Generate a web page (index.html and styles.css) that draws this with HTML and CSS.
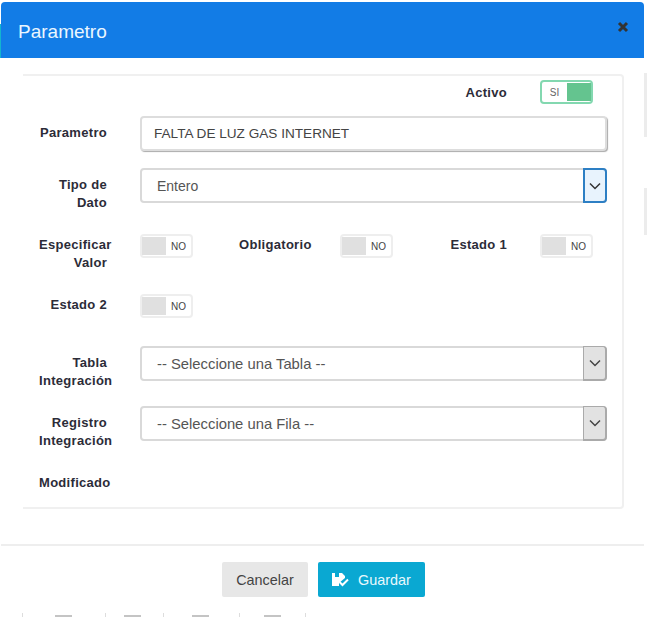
FILE: index.html
```html
<!DOCTYPE html>
<html lang="es">
  <head>
    <meta charset="UTF-8" />
    <meta name="viewport" content="width=device-width, initial-scale=1.0" />
    <title>Parametro</title>
    <link rel="stylesheet" href="styles.css">
  </head>
  <body>
    <div class="page">
      <div class="rail rail-left"><div class="rail-teal"></div></div>
      <div class="modal">
        <div class="modal-header">
          <h1>Parametro</h1>
          <button class="close" aria-label="Cerrar">
            <svg width="12" height="12" viewBox="0 0 12 12"><path d="M2 2l8 8M10 2l-8 8" stroke="#333" stroke-width="3" fill="none"/></svg>
          </button>
        </div>
        <div class="modal-body">
          <div class="card">
            <div class="row row-activo">
              <label class="lbl lbl-activo">Activo</label>
              <div class="field"><div class="toggle on"><span class="toggle-text">SI</span><span class="knob"></span></div></div>
            </div>
            <div class="row row-parametro">
              <label class="lbl lbl-input">Parametro</label>
              <div class="field field-wide"><input class="text-input" type="text" value="FALTA DE LUZ GAS INTERNET"></div>
            </div>
            <div class="row row-tipo">
              <label class="lbl lbl-input">Tipo de Dato</label>
              <div class="field field-wide">
                <div class="select">
                  <select><option>Entero</option></select>
                  <span class="select-arrow focused"><svg width="12" height="8" viewBox="0 0 12 8"><path d="M1 1.5l5 5 5-5" stroke="#333" stroke-width="1.5" fill="none"/></svg></span>
                </div>
              </div>
            </div>
            <div class="row row-flags">
              <label class="lbl">Especificar Valor</label>
              <div class="field"><div class="toggle"><span class="knob"></span><span class="toggle-text">NO</span></div></div>
              <label class="lbl">Obligatorio</label>
              <div class="field"><div class="toggle"><span class="knob"></span><span class="toggle-text">NO</span></div></div>
              <label class="lbl">Estado 1</label>
              <div class="field"><div class="toggle"><span class="knob"></span><span class="toggle-text">NO</span></div></div>
            </div>
            <div class="row row-estado">
              <label class="lbl">Estado 2</label>
              <div class="field"><div class="toggle"><span class="knob"></span><span class="toggle-text">NO</span></div></div>
            </div>
            <div class="row row-tabla">
              <label class="lbl lbl-input">Tabla Integración</label>
              <div class="field field-wide">
                <div class="select">
                  <select class="placeholder"><option>-- Seleccione una Tabla --</option></select>
                  <span class="select-arrow"><svg width="12" height="8" viewBox="0 0 12 8"><path d="M1 1.5l5 5 5-5" stroke="#444" stroke-width="1.5" fill="none"/></svg></span>
                </div>
              </div>
            </div>
            <div class="row row-registro">
              <label class="lbl lbl-input">Registro Integración</label>
              <div class="field field-wide">
                <div class="select">
                  <select class="placeholder"><option>-- Seleccione una Fila --</option></select>
                  <span class="select-arrow"><svg width="12" height="8" viewBox="0 0 12 8"><path d="M1 1.5l5 5 5-5" stroke="#444" stroke-width="1.5" fill="none"/></svg></span>
                </div>
              </div>
            </div>
            <div class="row">
              <label class="lbl">Modificado</label>
            </div>
          </div>
        </div>
        <div class="modal-footer">
          <button class="btn btn-cancel">Cancelar</button>
          <button class="btn btn-save">
            <svg width="17" height="14" viewBox="0 0 17 14"><path d="M0 0h3v4h4V0h3l3 3v2l-6 5v3H0z" fill="#fff"/><path d="M7.500 9l3 3L16 6.500" stroke="#fff" stroke-width="2" fill="none"/></svg>
            Guardar
          </button>
        </div>
      </div>
      <div class="rail rail-right">
        <div class="rail-grey rail-a"></div>
        <div class="rail-grey rail-b"></div>
      </div>
    </div>
    <div class="behind">
      <div class="behind-cell cell-a"><span></span></div>
      <div class="behind-cell cell-b"><span></span></div>
      <div class="behind-cell cell-c"><span></span></div>
      <div class="behind-cell cell-d"><span></span></div>
    </div>
  </body>
</html>
```

FILE: styles.css
```css
* {
  margin: 0;
  padding: 0;
  box-sizing: border-box;
  font-family: "Liberation Sans", Arial, sans-serif;
}

body {
  width: 647px;
  height: 617px;
  overflow: hidden;
  background: #fff;
  color: #333;
}

.page {
  display: flex;
  height: 612px;
}

.rail-left {
  width: 1px;
  padding-top: 24px;
}

.rail-teal {
  height: 34px;
  background: #12b5cf;
}

.rail-right {
  width: 3px;
  padding-top: 73px;
}

.rail-grey {
  background: #ececec;
}

.rail-a {
  height: 64px;
  margin-bottom: 51px;
}

.rail-b {
  height: 47px;
}

.modal {
  width: 643px;
  margin-top: 2px;
  background: #fff;
}

.modal-header {
  display: flex;
  justify-content: space-between;
  height: 56px;
  background: #127ce6;
  border-radius: 4px 4px 0 0;
  padding: 0 15px 0 17px;
}

.modal-header h1 {
  font-size: 19px;
  font-weight: 400;
  line-height: 59px;
  color: #eaf6ff;
}

.close {
  height: 12px;
  margin-top: 19px;
  background: none;
  border: none;
}

.modal-body {
  padding: 16px 20px 35px 22px;
  border-bottom: 2px solid #eee;
}

.card {
  width: 601px;
  height: 435px;
  padding-top: 4px;
  border: 2px solid #f0f0f0;
  border-left: none;
  border-radius: 0 4px 4px 0;
}

.row {
  display: grid;
  grid-template-columns: repeat(6, 100px);
}

.row-activo { margin-bottom: 12px; }
.row-parametro { margin-bottom: 17px; }
.row-tipo { margin-bottom: 22px; }
.row-flags { margin-bottom: 22px; }
.row-estado { margin-bottom: 28px; }
.row-tabla { margin-bottom: 16px; }
.row-registro { margin-bottom: 22px; }

.lbl {
  padding: 2px 16px 0;
  font-size: 13px;
  font-weight: 700;
  line-height: 18px;
  letter-spacing: 0.3px;
  text-align: right;
  color: #2c2c38;
}

.lbl-input {
  padding-top: 8px;
}

.lbl-activo {
  grid-column: 5;
  padding-top: 4px;
}

.field {
  padding: 0 16px 0 17px;
}

.field-wide {
  grid-column: span 5;
}

.toggle {
  display: flex;
  align-items: center;
  width: 53px;
  height: 24px;
  padding: 2px 0;
  background: #fff;
  border: 2px solid #eee;
  border-radius: 4px;
}

.knob {
  width: 24px;
  height: 18px;
  background: #e0e0e0;
}

.toggle-text {
  flex: 1;
  font-size: 10px;
  text-align: center;
  color: #444;
}

.toggle.on {
  border-color: #83d8b0;
}

.toggle.on .knob {
  background: #64c48f;
}

.toggle.on .toggle-text {
  color: #666;
}

.text-input {
  display: block;
  width: 467px;
  height: 35px;
  padding: 0 12px;
  font-size: 13.6px;
  color: #444;
  background: #fff;
  border: 2px solid #ddd;
  border-radius: 4px;
  box-shadow: 1px 1px 1px #aaa;
  outline: none;
}

.select {
  display: flex;
  width: 467px;
  height: 35px;
  background: #fff;
  border: 2px solid #d9d9d9;
  border-radius: 4px;
}

.select select {
  flex: 1;
  padding-left: 15px;
  font-size: 14px;
  color: #555;
  background: transparent;
  border: none;
  outline: none;
  appearance: none;
}

.select select.placeholder {
  font-size: 14.8px;
}

.select-arrow {
  display: flex;
  align-items: center;
  justify-content: center;
  width: 24px;
  margin: -2px -2px -2px 0;
  background: #e2e2e2;
  border: 2px solid #aaa;
  border-width: 1px 2px 2px 1px;
  border-radius: 0 4px 4px 0;
}

.select-arrow.focused {
  background: #e8f3fd;
  border: 2px solid #2d7fc4;
}

.modal-footer {
  display: flex;
  justify-content: center;
  gap: 10px;
  padding: 16px 0 0 2px;
}

.btn {
  display: flex;
  align-items: center;
  justify-content: center;
  height: 35px;
  font-size: 14.4px;
  border: none;
  border-radius: 2px;
}

.btn-cancel {
  width: 86px;
  background: #e7e7e7;
  color: #444;
}

.btn-save {
  gap: 9px;
  width: 107px;
  background: #0aa8d2;
  color: #e8f8fd;
}

.behind {
  display: flex;
  height: 5px;
  padding: 1px 0 0 22px;
}

.behind-cell {
  flex: none;
  height: 4px;
  border-left: 1px solid #ddd;
}

.behind-cell span {
  display: block;
  width: 17px;
  height: 2px;
  margin-top: 2px;
  background: #c4c4c4;
}

.cell-a { width: 83px; padding-left: 32px; }
.cell-b { width: 58px; padding-left: 18px; }
.cell-c { width: 76px; padding-left: 28px; }
.cell-d { width: 67px; padding-left: 24px; border-right: 1px solid #ddd; }
```
